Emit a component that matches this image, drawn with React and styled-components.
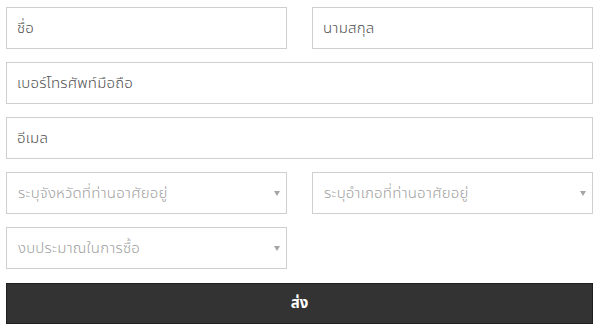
import React from "react";
import styled, { createGlobalStyle } from "styled-components";

const Global = createGlobalStyle`
  html, body { margin: 0; padding: 0; background: #fff; }
  body { font-family: "Noto Sans Thai", "Noto Sans", "Liberation Sans", sans-serif; }
  * { box-sizing: border-box; }
`;

const Form = styled.form`
  display: grid;
  grid-template-columns: 281px 281px;
  column-gap: 25px;
  row-gap: 13px;
  padding: 7px 7px 0 6px;
  width: 600px;
`;

const Field = styled.div`
  position: relative;
  grid-column: ${(p) => (p.$full ? "1 / -1" : "auto")};
  height: 42px;
`;

const TextInput = styled.input`
  width: 100%;
  height: 100%;
  border: 1px solid #cfcfcf;
  background: #fff;
  padding: 0 10px;
  font-family: inherit;
  font-size: 15px;
  font-weight: 300;
  letter-spacing: 0.2px;
  color: #333;
  outline: none;
  &::placeholder { color: #505050; }
`;

const Select = styled.select`
  appearance: none;
  -webkit-appearance: none;
  width: 100%;
  height: 100%;
  border: 1px solid #cfcfcf;
  background: #fff;
  padding: 0 24px 0 11px;
  font-family: inherit;
  font-size: 15px;
  font-weight: 300;
  letter-spacing: 0.2px;
  color: #a0a0a0;
  outline: none;
  border-radius: 0;
`;

const Arrow = styled.span`
  position: absolute;
  right: 7px;
  top: 50%;
  margin-top: -2px;
  width: 0;
  height: 0;
  border-left: 3px solid transparent;
  border-right: 3px solid transparent;
  border-top: 5px solid #a5a5a5;
  pointer-events: none;
`;

const Submit = styled.button`
  grid-column: 1 / -1;
  height: 41px;
  margin-top: 1px;
  border: 1px solid #1f1f1f;
  background: #333;
  color: #fff;
  font-family: inherit;
  font-size: 15px;
  font-weight: 700;
  cursor: pointer;
`;

function SelectField({ placeholder, full }) {
  return (
    <Field $full={full}>
      <Select defaultValue="">
        <option value="" disabled>
          {placeholder}
        </option>
      </Select>
      <Arrow />
    </Field>
  );
}

export default function App() {
  return (
    <>
      <Global />
      <Form onSubmit={(e) => e.preventDefault()}>
        <Field>
          <TextInput placeholder="ชื่อ" />
        </Field>
        <Field>
          <TextInput placeholder="นามสกุล" />
        </Field>
        <Field $full>
          <TextInput placeholder="เบอร์โทรศัพท์มือถือ" />
        </Field>
        <Field $full>
          <TextInput placeholder="อีเมล" />
        </Field>
        <SelectField placeholder="ระบุจังหวัดที่ท่านอาศัยอยู่" />
        <SelectField placeholder="ระบุอำเภอที่ท่านอาศัยอยู่" />
        <SelectField placeholder="งบประมาณในการซื้อ" />
        <div />
        <Submit type="submit">ส่ง</Submit>
      </Form>
    </>
  );
}
